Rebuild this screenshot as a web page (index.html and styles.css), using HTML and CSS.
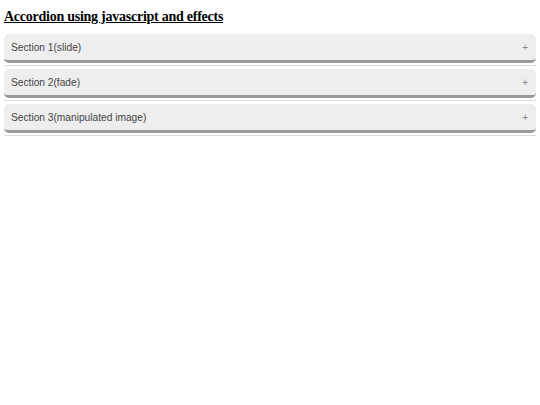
FILE: index.html
```html
<!DOCTYPE html>
<html>
<head>
<meta charset="utf-8">
<link rel="stylesheet" href="styles.css">
</head>
<body>
<h2 class="title">Accordion using javascript and effects</h2>
<div class="accordion">
  <div class="item">
    <button class="acc-btn"><span>Section 1(slide)</span><span class="plus">+</span></button>
    <div class="panel"></div>
  </div>
  <div class="item">
    <button class="acc-btn"><span>Section 2(fade)</span><span class="plus">+</span></button>
    <div class="panel"></div>
  </div>
  <div class="item">
    <button class="acc-btn"><span>Section 3(manipulated image)</span><span class="plus">+</span></button>
    <div class="panel"></div>
  </div>
</div>
</body>
</html>
```
FILE: styles.css
```css
body {
  margin: 4px;
  background: #fff;
  font-family: "Liberation Serif", serif;
}
.title {
  font-size: 14px;
  line-height: 16px;
  letter-spacing: -0.25px;
  font-weight: bold;
  text-decoration: underline;
  margin: 5px 0 9px;
  color: #000;
}
.accordion {
  display: flex;
  flex-direction: column;
  gap: 3px;
}
.acc-btn {
  display: flex;
  justify-content: space-between;
  align-items: center;
  width: 100%;
  height: 29px;
  padding: 0 7px 0 7px;
  background: #eee;
  border: none;
  border-bottom: 3px solid #999;
  border-radius: 5px;
  font-family: "Liberation Sans", Arial, sans-serif;
  font-size: 10.2px;
  color: #444;
  box-sizing: border-box;
}
.plus {
  font-size: 10px;
  color: #888;
  margin-right: 1px;
}
.panel {
  margin-top: 2px;
  border-top: 1px solid #ddd;
  height: 0;
}
```
